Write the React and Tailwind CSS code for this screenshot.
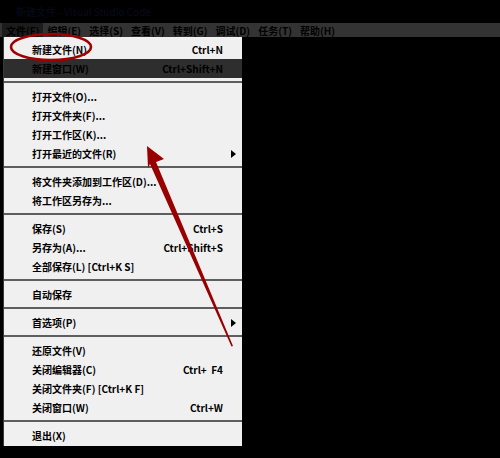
import React from 'react';

const font = { fontFamily: '"Noto Sans CJK SC", "Noto Sans", sans-serif' };

const topMenus = ['文件(F)', '编辑(E)', '选择(S)', '查看(V)', '转到(G)', '调试(D)', '任务(T)', '帮助(H)'];

// null = separator
const items = [
  { label: '新建文件(N)', key: 'Ctrl+N' },
  { label: '新建窗口(W)', key: 'Ctrl+Shift+N', active: true },
  null,
  { label: '打开文件(O)...' },
  { label: '打开文件夹(F)...' },
  { label: '打开工作区(K)...' },
  { label: '打开最近的文件(R)', sub: true },
  null,
  { label: '将文件夹添加到工作区(D)...' },
  { label: '将工作区另存为...' },
  null,
  { label: '保存(S)', key: 'Ctrl+S' },
  { label: '另存为(A)...', key: 'Ctrl+Shift+S' },
  { label: '全部保存(L) [Ctrl+K S]' },
  null,
  { label: '自动保存' },
  null,
  { label: '首选项(P)', sub: true },
  null,
  { label: '还原文件(V)' },
  { label: '关闭编辑器(C)', key: 'Ctrl+  F4' },
  { label: '关闭文件夹(F) [Ctrl+K F]' },
  { label: '关闭窗口(W)', key: 'Ctrl+W' },
  null,
  { label: '退出(X)' },
];

function SubArrow() {
  return (
    <svg width="5" height="8" viewBox="0 0 5 8" className="ml-auto">
      <polygon points="0,0 5,4 0,8" fill="#000" />
    </svg>
  );
}

function MenuRow({ item }) {
  return (
    <div
      className={`flex h-[19px] items-center pl-[28px] pr-[6px] text-[10px] font-bold whitespace-pre text-black ${
        item.active ? 'bg-[#2e2e2e]' : ''
      }`}
    >
      <span>{item.label}</span>
      {item.key && <span className="ml-auto mr-[13px]">{item.key}</span>}
      {item.sub && <SubArrow />}
    </div>
  );
}

export default function App() {
  return (
    <div className="relative w-[500px] h-[458px] bg-black overflow-hidden" style={font}>
      {/* title bar */}
      <div className="h-[23px] flex items-center pl-[16px] text-[10px] text-[#070c1c]">
        新建文件 - Visual Studio Code
      </div>

      {/* menu bar */}
      <div className="h-[14px] bg-[#333333] flex items-center pl-[2px] text-[10px] font-bold text-black">
        {topMenus.map((m, i) => (
          <div key={m} className={`h-full flex items-center px-[4px] ${i === 0 ? 'bg-[#1c1c1c]' : ''}`}>
            {m}
          </div>
        ))}
      </div>

      {/* dropdown */}
      <div className="ml-[3px] w-[239px] bg-[#f0f0f0] border-l border-[#3a3a3a] pt-[3px] pb-[1px]">
        {items.map((item, i) =>
          item ? (
            <MenuRow key={i} item={item} />
          ) : (
            <div key={i} className="pt-[3px] pb-[4px]">
              <div className="h-[2px] bg-[#5e5e5e]" />
            </div>
          )
        )}
      </div>

      {/* annotations */}
      <svg className="absolute inset-0 pointer-events-none" width="500" height="458" viewBox="0 0 500 458">
        <ellipse cx="51" cy="47" rx="40" ry="13" fill="none" stroke="#a00000" strokeWidth="2.6" />
        <polygon
          points="147,146 164,159 156,162 233,346 231.5,346.5 150,164 148,168"
          fill="#990000"
        />
      </svg>
    </div>
  );
}
